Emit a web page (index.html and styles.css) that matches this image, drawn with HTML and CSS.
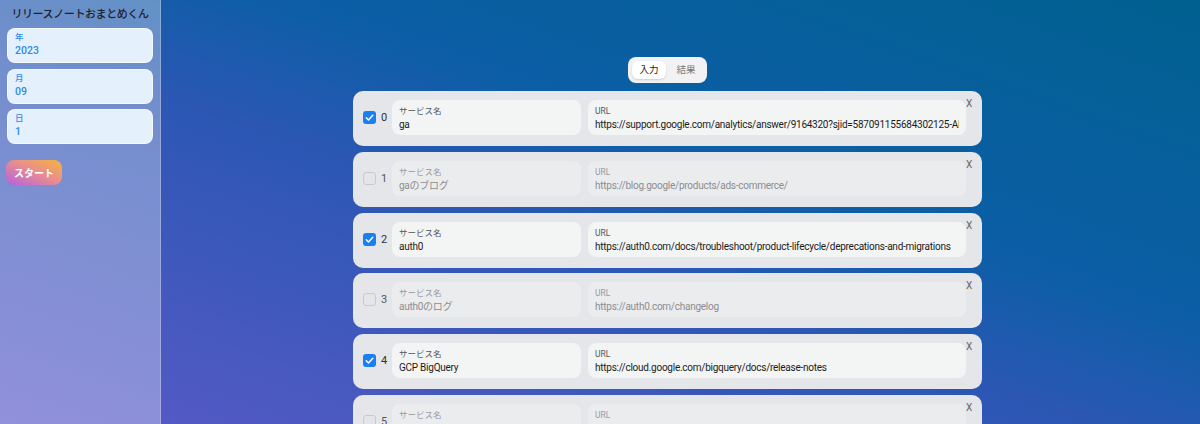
FILE: index.html
```html
<!DOCTYPE html>
<html lang="ja">
<head>
<meta charset="utf-8">
<title>リリースノートおまとめくん</title>
<link rel="stylesheet" href="styles.css">
</head>
<body>
<aside class="sidebar">
  <h1 class="title">リリースノートおまとめくん</h1>
  <div class="date-field"><div class="df-label">年</div><div class="df-value">2023</div></div>
  <div class="date-field"><div class="df-label">月</div><div class="df-value">09</div></div>
  <div class="date-field"><div class="df-label">日</div><div class="df-value">1</div></div>
  <button class="start">スタート</button>
</aside>
<main class="main">
  <div class="tabs">
    <span class="tab active">入力</span>
    <span class="tab">結果</span>
  </div>
  <div class="list">
    <div class="card">
      <span class="check on"><svg viewBox="0 0 13 13" width="13" height="13"><path d="M3.3 6.8 L5.5 9 L9.8 4.3" fill="none" stroke="#fff" stroke-width="1.5" stroke-linecap="round" stroke-linejoin="round"/></svg></span>
      <span class="idx">0</span>
      <div class="field name"><div class="f-label">サービス名</div><div class="f-value">ga</div></div>
      <div class="field url"><div class="f-label">URL</div><div class="f-value">https://support.google.com/analytics/answer/9164320?sjid=587091155684302125-AP&amp;hl=ja</div></div>
      <span class="close">X</span>
    </div>
    <div class="card off">
      <span class="check"></span>
      <span class="idx">1</span>
      <div class="field name"><div class="f-label">サービス名</div><div class="f-value">gaのブログ</div></div>
      <div class="field url"><div class="f-label">URL</div><div class="f-value">https://blog.google/products/ads-commerce/</div></div>
      <span class="close">X</span>
    </div>
    <div class="card">
      <span class="check on"><svg viewBox="0 0 13 13" width="13" height="13"><path d="M3.3 6.8 L5.5 9 L9.8 4.3" fill="none" stroke="#fff" stroke-width="1.5" stroke-linecap="round" stroke-linejoin="round"/></svg></span>
      <span class="idx">2</span>
      <div class="field name"><div class="f-label">サービス名</div><div class="f-value">auth0</div></div>
      <div class="field url"><div class="f-label">URL</div><div class="f-value">https://auth0.com/docs/troubleshoot/product-lifecycle/deprecations-and-migrations</div></div>
      <span class="close">X</span>
    </div>
    <div class="card off">
      <span class="check"></span>
      <span class="idx">3</span>
      <div class="field name"><div class="f-label">サービス名</div><div class="f-value">auth0のログ</div></div>
      <div class="field url"><div class="f-label">URL</div><div class="f-value">https://auth0.com/changelog</div></div>
      <span class="close">X</span>
    </div>
    <div class="card">
      <span class="check on"><svg viewBox="0 0 13 13" width="13" height="13"><path d="M3.3 6.8 L5.5 9 L9.8 4.3" fill="none" stroke="#fff" stroke-width="1.5" stroke-linecap="round" stroke-linejoin="round"/></svg></span>
      <span class="idx">4</span>
      <div class="field name"><div class="f-label">サービス名</div><div class="f-value">GCP BigQuery</div></div>
      <div class="field url"><div class="f-label">URL</div><div class="f-value">https://cloud.google.com/bigquery/docs/release-notes</div></div>
      <span class="close">X</span>
    </div>
    <div class="card off">
      <span class="check"></span>
      <span class="idx">5</span>
      <div class="field name"><div class="f-label">サービス名</div><div class="f-value">GCP Cloud Run</div></div>
      <div class="field url"><div class="f-label">URL</div><div class="f-value">https://cloud.google.com/run/docs/release-notes</div></div>
      <span class="close">X</span>
    </div>
  </div>
</main>
</body>
</html>
```
FILE: styles.css
```css
* { box-sizing: border-box; }
html, body { margin: 0; padding: 0; height: 100%; }
body {
  display: flex;
  height: 424px;
  overflow: hidden;
  font-family: Roboto, "Noto Sans CJK JP", sans-serif;
  background: linear-gradient(to top right, #5b5ac8 0%, #2c57b4 45%, #0c5ea6 62%, #00608f 100%);
  color: #222;
}
.sidebar {
  width: 161px;
  flex: none;
  background: rgba(255,255,255,0.33);
  border-right: 1px solid rgba(255,255,255,0.25);
  padding: 8px 7px 0 7px;
  display: flex;
  flex-direction: column;
  align-items: stretch;
}
.title {
  margin: 0 0 6px 0;
  font-size: 11px;
  line-height: 14px;
  font-weight: 500;
  text-align: center;
  color: #1e2230;
  letter-spacing: -0.4px;
}
.date-field {
  flex: none;
  height: 35px;
  margin-bottom: 5.5px;
  background: #e4f1fd;
  border: 1px solid rgba(255,255,255,0.6);
  border-radius: 8px;
  padding: 3px 7px 0;
  color: #2f8ae8;
}
.df-label { font-size: 8.5px; line-height: 10px; font-weight: 500; }
.df-value { font-size: 10.5px; line-height: 17px; font-weight: 500; }
.start {
  flex: none;
  align-self: flex-start;
  margin: 10px 0 0 -1px;
  width: 56px;
  height: 25px;
  border: none;
  border-radius: 8px;
  background: linear-gradient(to top right, #b460e2 0%, #e98f8c 55%, #f7b43c 100%);
  color: #fff;
  font-family: Roboto, "Noto Sans CJK JP", sans-serif;
  font-size: 10px;
  font-weight: 700;
  padding: 0;
}
.main {
  flex: 1;
  padding: 57px 26px 0 0;
  display: flex;
  flex-direction: column;
  align-items: center;
}
.tabs {
  flex: none;
  display: flex;
  align-items: center;
  height: 26px;
  padding: 0 4px;
  background: #f2f2f4;
  border-radius: 8px;
  gap: 4px;
}
.tab {
  font-size: 9.5px;
  line-height: 18px;
  height: 18px;
  padding: 0 7px;
  color: #777;
  border-radius: 6px;
}
.tab.active {
  background: #fff;
  color: #222;
  box-shadow: 0 1px 2px rgba(0,0,0,0.15);
}
.list {
  flex: none;
  margin-top: 8px;
  width: 629px;
  display: flex;
  flex-direction: column;
  gap: 5.8px;
}
.card {
  flex: none;
  display: flex;
  align-items: center;
  height: 55px;
  padding: 0 9px 2px 10px;
  background: #e5e6ea;
  border-radius: 10px;
}
.check {
  width: 13px;
  height: 13px;
  flex: none;
  border-radius: 3px;
  border: 1px solid #c9cacd;
  background: #e4e5e8;
}
.check.on {
  border: none;
  background: #1a7ff0;
  display: block;
}
.check svg { display: block; }
.idx {
  flex: none;
  width: 7px;
  margin: 0 4px 0 5px;
  font-size: 11px;
  color: #333;
}
.field {
  height: 35px;
  background: #f3f4f4;
  border-radius: 8px;
  padding: 5px 7px 0;
  overflow: hidden;
  min-width: 0;
}
.field.name { flex: 0 0 189px; }
.field.url { flex: 0 0 378px; margin-left: 7px; }
.f-label { font-size: 8.5px; line-height: 12px; color: #555; }
.f-value {
  font-size: 10px;
  letter-spacing: -0.25px;
  line-height: 16px;
  color: #1c1c1c;
  white-space: nowrap;
  overflow: hidden;
}
.card.off .field { background: #ebecee; }
.card.off .f-label { color: #9a9a9c; }
.card.off .f-value { color: #8c8c8e; }
.card.off .idx { color: #555; }
.close {
  flex: none;
  align-self: flex-start;
  margin-top: 7px;
  width: 7px;
  font-size: 10px;
  line-height: 12px;
  color: #666;
}
```
